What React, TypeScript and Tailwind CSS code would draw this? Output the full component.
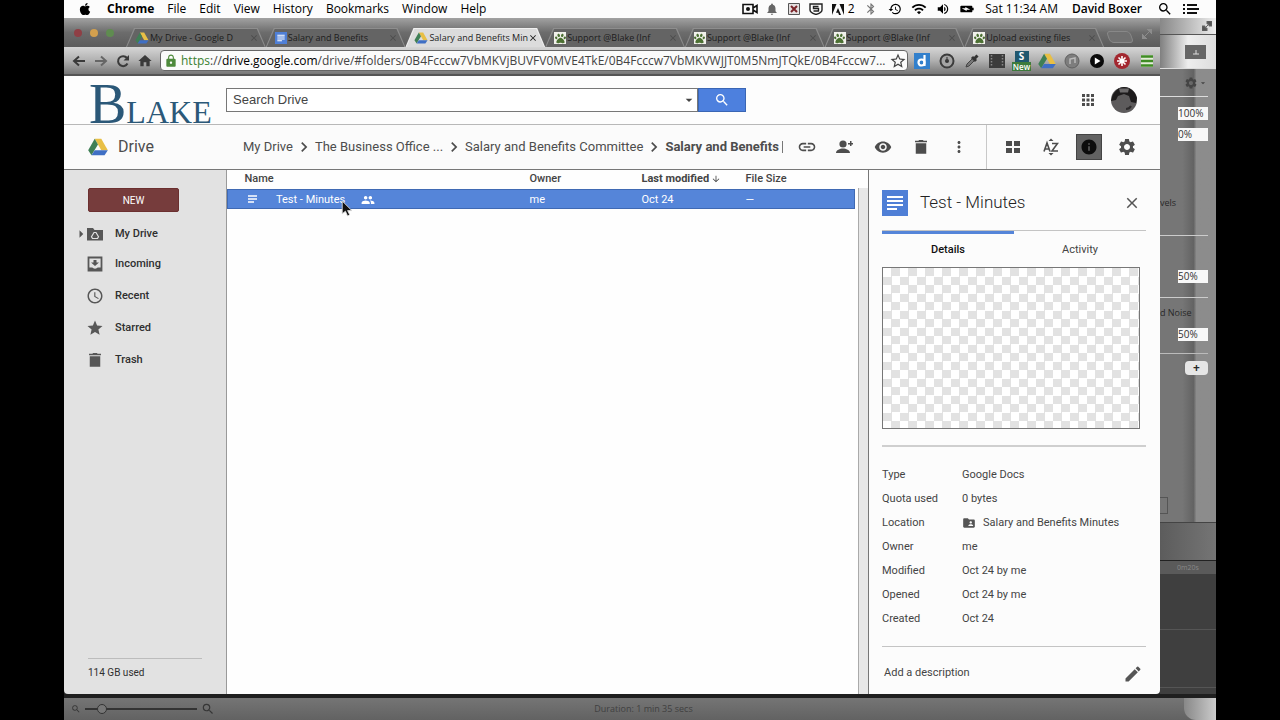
import type { ReactNode } from "react";
import {
  MdAccessTime,
  MdApps,
  MdArrowDownward,
  MdArrowDropDown,
  MdArrowRight,
  MdBatteryChargingFull,
  MdBluetooth,
  MdChevronRight,
  MdClose,
  MdFolderShared,
  MdHistory,
  MdHome,
  MdInfo,
  MdLink,
  MdLock,
  MdMoreVert,
  MdNotifications,
  MdPeople,
  MdSearch,
  MdSettings,
  MdStar,
  MdStarBorder,
  MdVisibility,
  MdVolumeUp,
  MdWifi,
} from "react-icons/md";
import { FaApple, FaPaw } from "react-icons/fa";

const menus = ["File", "Edit", "View", "History", "Bookmarks", "Window", "Help"];

function DriveLogo({ className = "" }: { className?: string }) {
  return (
    <svg viewBox="0 0 24 22" className={className} aria-hidden="true">
      <path d="M8 1h8l8 14h-8z" fill="#e8bf45" />
      <path d="M8 1l4 7L4 21 0 15z" fill="#3f7f55" />
      <path d="M8 15h16l-4 6H4z" fill="#3f6fc4" />
    </svg>
  );
}

function DocIcon({ className = "" }: { className?: string }) {
  return (
    <svg viewBox="0 0 26 26" className={className} aria-hidden="true">
      <path d="M0 0h26v26H0z" fill="#4f7fd6" />
      <path d="M5 7h16M5 11h16M5 15h16M5 19h10" stroke="#fff" strokeWidth="2.2" />
    </svg>
  );
}

function PawIcon() {
  return (
    <span className="flex size-3 shrink-0 items-center justify-center bg-[#f0f0ea]">
      <FaPaw className="size-[11px] text-[#4c7033]" />
    </span>
  );
}

function TrashIcon({ className = "" }: { className?: string }) {
  return (
    <svg viewBox="0 0 24 24" className={className} fill="currentColor" aria-hidden="true">
      <path d="M5 7h14v14H5zM20 3.500h-4.500l-1-1h-5l-1 1H4v2.200h16z" />
    </svg>
  );
}

function PencilIcon() {
  return (
    <svg viewBox="0 0 24 24" className="size-5 text-[#555]" fill="currentColor" aria-hidden="true">
      <path d="M3 17.250V21h3.750L17.810 9.940l-3.750-3.750zM20.710 7.040a1 1 0 0 0 0-1.410l-2.340-2.340a1 1 0 0 0-1.410 0l-1.830 1.830 3.750 3.750z" />
    </svg>
  );
}

function PersonAddIcon() {
  return (
    <svg viewBox="0 0 18 16" className="h-4 w-[18px]" fill="currentColor" aria-hidden="true">
      <circle cx="7" cy="5" r="3.6" />
      <path d="M0 14c0-3 4-4.500 7-4.500s7 1.500 7 4.500zM14 2h1.500v2H17v1.500h-1.500V7H14V5.500h-2V4h2z" />
    </svg>
  );
}

function GridIcon() {
  return (
    <svg viewBox="0 0 16 14" className="h-3.5 w-4" fill="currentColor" aria-hidden="true">
      <path d="M1 1h6v5H1zM9 1h6v5H9zM1 8h6v5H1zM9 8h6v5H9z" />
    </svg>
  );
}

function SortIcon() {
  return (
    <svg viewBox="0 0 16 18" className="h-[18px] w-4" aria-hidden="true">
      <path d="M5.500 3L8 .5 10.500 3zM5.500 15L8 17.500 10.500 15z" fill="currentColor" />
      <path d="M1 13.500L4 5l3 8.500M2 11h4M9 5.500h5.500L9 13h6" fill="none" stroke="currentColor" strokeWidth="1.600" />
    </svg>
  );
}

function FolderDriveIcon() {
  return (
    <svg viewBox="0 0 16 14" className="h-3.5 w-4" aria-hidden="true">
      <path d="M0 1h6l1.500 2H16v10.500H0z" fill="#575757" />
      <path d="M7 5.500h2l2.500 4.300-1 1.700h-5l-1-1.700z" fill="none" stroke="#e2e2e2" strokeWidth="1.200" />
    </svg>
  );
}

function IncomingIcon() {
  return (
    <svg viewBox="0 0 16 16" className="size-4" aria-hidden="true">
      <path d="M1.500 1.500h13v13h-13z" fill="none" stroke="#575757" strokeWidth="1.800" />
      <path d="M1 11.500h4.500c.5 1.500 4.500 1.500 5 0H15V15H1zM6.500 4h3v2.500H12L8 10 4 6.500h2.500z" fill="#575757" />
    </svg>
  );
}

function ArrowIcon({ flip = false }: { flip?: boolean }) {
  return (
    <svg viewBox="0 0 14 12" className="h-3 w-3.5" aria-hidden="true">
      <path
        d={flip ? "M1 6h11M7 1.500L12 6l-5 4.500" : "M13 6H2M7 1.500L2 6l5 4.500"}
        fill="none"
        stroke="currentColor"
        strokeWidth="2"
      />
    </svg>
  );
}

function ReloadIcon() {
  return (
    <svg viewBox="0 0 14 14" className="size-3.5" aria-hidden="true">
      <path d="M11.500 9.500A5 5 0 1 1 11 4" fill="none" stroke="currentColor" strokeWidth="2" />
      <path d="M13 1v5.500H7.500z" fill="currentColor" />
    </svg>
  );
}

function MenuCell({ children, wide = false }: { children: ReactNode; wide?: boolean }) {
  return <span className={`flex items-center justify-center ${wide ? "w-6" : "w-[22px]"}`}>{children}</span>;
}

function MenuBar() {
  return (
    <header className="flex h-[18px] items-center bg-[#fcfcfc] pl-3.5 pr-3 text-xs text-black">
      <FaApple className="size-3.5" />
      <span className="ml-[15px] font-bold">Chrome</span>
      <nav className="ml-[13px] flex gap-[13px]" aria-label="Menu bar">
        {menus.map((m) => (
          <button key={m} type="button">
            {m}
          </button>
        ))}
      </nav>
      <div className="ml-auto flex items-center whitespace-nowrap">
        <MenuCell>
          <svg viewBox="0 0 16 12" className="h-3 w-4" aria-hidden="true">
            <path d="M1 1.500h10v9H1zM11 5l4-2.500v7L11 7z" fill="none" stroke="#111" strokeWidth="1.600" />
            <circle cx="6" cy="6" r="2" fill="#111" />
          </svg>
        </MenuCell>
        <MenuCell>
          <MdNotifications className="size-3.5 text-[#666]" />
        </MenuCell>
        <MenuCell>
          <svg viewBox="0 0 12 12" className="size-3" aria-hidden="true">
            <path d="M.5.5h11v11H.5z" fill="#e4e0e0" stroke="#555" />
            <path d="M3 3l6 6M9 3L3 9" stroke="#7a2429" strokeWidth="2" />
          </svg>
        </MenuCell>
        <MenuCell>
          <svg viewBox="0 0 14 12" className="h-3 w-3.5" aria-hidden="true">
            <path d="M1 1h12v6c0 2-3 3.500-6 4.500C4 10.500 1 9 1 7z" fill="none" stroke="#222" strokeWidth="1.400" />
            <path d="M9.500 3.500h-5v2h5v2.500h-5" fill="none" stroke="#222" strokeWidth="1.400" />
          </svg>
        </MenuCell>
        <span className="flex w-8 items-center justify-center gap-1">
          <svg viewBox="0 0 12 11" className="h-[11px] w-3" aria-hidden="true">
            <path d="M0 0h4.500L0 11zM12 0H7.500L12 11zM6 4l3 7H7L6.200 8.800H4z" fill="#111" />
          </svg>
          2
        </span>
        <MenuCell wide>
          <MdBluetooth className="size-3.5 text-[#777]" />
        </MenuCell>
        <MenuCell wide>
          <MdHistory className="size-3.5" />
        </MenuCell>
        <MenuCell wide>
          <MdWifi className="size-4" />
        </MenuCell>
        <MenuCell wide>
          <MdVolumeUp className="size-3.5" />
        </MenuCell>
        <MenuCell wide>
          <MdBatteryChargingFull className="size-4 rotate-90" />
        </MenuCell>
        <span className="ml-1.5">Sat 11:34 AM</span>
        <span className="ml-3.5 mr-2.5 font-semibold">David Boxer</span>
        <button type="button" aria-label="Spotlight" className="flex w-[26px] justify-center">
          <MdSearch className="size-4" />
        </button>
        <button type="button" aria-label="Notification center" className="flex w-[26px] justify-center">
          <svg viewBox="0 0 16 10" className="h-2.5 w-4" aria-hidden="true">
            <path d="M0 1h2M0 5h2M0 9h2M4 1h10M4 5h12M4 9h10" stroke="#111" strokeWidth="2" />
          </svg>
        </button>
      </div>
    </header>
  );
}

type TabData = { title: string; icon: ReactNode; active?: boolean };

const tabs: TabData[] = [
  { title: "My Drive - Google D", icon: <DriveLogo className="h-3 w-3.5 shrink-0" /> },
  { title: "Salary and Benefits", icon: <DocIcon className="size-3 shrink-0" /> },
  { title: "Salary and Benefits Min", icon: <DriveLogo className="h-3 w-3.5 shrink-0" />, active: true },
  { title: "Support @Blake (Inf", icon: <PawIcon /> },
  { title: "Support @Blake (Inf", icon: <PawIcon /> },
  { title: "Support @Blake (Inf", icon: <PawIcon /> },
  { title: "Upload existing files", icon: <PawIcon /> },
];

function TabStrip() {
  return (
    <div className="flex h-[29px] items-end bg-linear-to-b from-[#a2a2a2] via-[#6c6c6c] to-[#5c5c5c] pl-2.5">
      <div className="flex w-[52px] gap-2 self-center">
        <span className="size-2 rounded-full bg-[#8f3f45]" />
        <span className="size-2 rounded-full bg-[#d3a04e]" />
        <span className="size-2 rounded-full bg-[#5f8c50]" />
      </div>
      <div className="flex min-w-0 flex-1 text-[9px]" role="tablist">
        {tabs.map((t, i) => (
          <div
            key={i}
            className={`min-w-0 flex-1 px-px pt-px [clip-path:polygon(8px_0,calc(100%-8px)_0,100%_100%,0_100%)] ${
              t.active ? "bg-[#f0f0f0]" : "bg-[#8d8d8d]"
            }`}
          >
            <div
              className={`flex h-[18px] items-center pl-2 pr-1.5 [clip-path:polygon(8px_0,calc(100%-8px)_0,100%_100%,0_100%)] ${
                t.active ? "bg-[#dcdcdc] text-[#1c1c1c]" : "bg-[#646464] text-[#1c1c1c]"
              }`}
            >
              {t.icon}
              <button
                type="button"
                role="tab"
                aria-selected={!!t.active}
                className={`ml-px flex-1 whitespace-nowrap text-left ${t.active ? "font-medium" : ""}`}
              >
                {t.title}
              </button>
              <button type="button" aria-label="Close tab">
                <MdClose className={t.active ? "size-2.5" : "size-2.5 text-[#4c4c4c]"} />
              </button>
            </div>
          </div>
        ))}
      </div>
      <button
        type="button"
        aria-label="New tab"
        className="mb-1 ml-1 h-3 w-6 skew-x-[20deg] rounded-sm border border-[#888] bg-[#707070]"
      />
      <svg viewBox="0 0 10 10" className="mb-2 ml-2.5 mr-2 size-2.5" aria-hidden="true">
        <path d="M5 0h5v5zM0 5v5h5zM9 1L1 9" fill="#8c8c8c" stroke="#8c8c8c" />
      </svg>
    </div>
  );
}

const extensions: { name: string; icon: ReactNode }[] = [
  {
    name: "Diigo",
    icon: (
      <svg viewBox="0 0 16 16" className="size-4">
        <path d="M0 0h16v16H0z" fill="#3280cc" />
        <path d="M10.500 2v11" stroke="#fff" strokeWidth="2.200" />
        <circle cx="7.500" cy="9.500" r="3" fill="none" stroke="#fff" strokeWidth="2.200" />
      </svg>
    ),
  },
  {
    name: "Clipper",
    icon: (
      <svg viewBox="0 0 16 16" className="size-4">
        <circle cx="8" cy="8" r="6.500" fill="#a4a4a4" stroke="#3c3c3c" strokeWidth="2" />
        <circle cx="8" cy="8" r="2" fill="#333" />
        <path d="M8 4v4" stroke="#444" strokeWidth="1.200" />
      </svg>
    ),
  },
  {
    name: "Color picker",
    icon: (
      <svg viewBox="0 0 16 16" className="size-4">
        <path d="M2 14l1-3 6-6 2 2-6 6z" fill="#777" stroke="#444" />
        <path d="M8 4l4 4M10 6l3.500-3.500" stroke="#333" strokeWidth="3" />
      </svg>
    ),
  },
  {
    name: "Video",
    icon: (
      <svg viewBox="0 0 16 16" className="size-4">
        <path d="M0 1h16v14H0z" fill="#3c3c3c" />
        <path d="M2.500 2v12M13.500 2v12" stroke="#888" strokeWidth="1.500" strokeDasharray="1.500 1.500" />
      </svg>
    ),
  },
  {
    name: "Snagit",
    icon: (
      <span className="flex w-[19px] flex-col items-center">
        <span className="w-3.5 bg-[#20586f] text-center text-[10px] leading-[11px] font-bold text-white">S</span>
        <span className="w-full bg-[#3d7a3c] text-center text-[8px] leading-[9px] font-semibold text-white">New</span>
      </span>
    ),
  },
  { name: "Drive", icon: <DriveLogo className="h-4 w-[18px]" /> },
  {
    name: "Music",
    icon: (
      <svg viewBox="0 0 16 16" className="size-4">
        <circle cx="8" cy="8" r="7" fill="#7d7d7d" stroke="#606060" />
        <path d="M6 11V6l5-1v5" fill="none" stroke="#bbb" strokeWidth="1.500" />
      </svg>
    ),
  },
  {
    name: "Player",
    icon: (
      <svg viewBox="0 0 16 16" className="size-3.5">
        <circle cx="8" cy="8" r="8" fill="#0a0a0a" />
        <path d="M5.500 4l6.500 4-6.500 4z" fill="#fff" />
      </svg>
    ),
  },
  {
    name: "LastPass",
    icon: (
      <svg viewBox="0 0 16 16" className="size-4">
        <circle cx="8" cy="8" r="8" fill="#a3272f" />
        <path d="M8 3v10M3 8h10M4.500 4.500l7 7M11.500 4.500l-7 7" stroke="#fff" strokeWidth="1.600" />
      </svg>
    ),
  },
  {
    name: "Chrome menu",
    icon: (
      <svg viewBox="0 0 12 12" className="size-3">
        <path d="M0 0h12v12H0z" fill="#e4ecd8" />
        <path d="M0 1.500h12M0 6h12M0 10.500h12" stroke="#3f8c24" strokeWidth="2.400" />
      </svg>
    ),
  },
];

function AddressBar() {
  return (
    <div className="flex h-[29px] items-center border-b-2 border-[#555] bg-linear-to-b from-[#d6d6d6] via-[#b0b0b0] to-[#787878] pl-1">
      <div className="flex text-[#3a3a3a]">
        <button type="button" aria-label="Back" className="flex w-[22px] items-center justify-center">
          <ArrowIcon />
        </button>
        <button type="button" aria-label="Forward" className="flex w-[22px] items-center justify-center text-[#666]">
          <ArrowIcon flip />
        </button>
        <button type="button" aria-label="Reload" className="flex w-[22px] items-center justify-center">
          <ReloadIcon />
        </button>
        <button type="button" aria-label="Home" className="flex w-[22px] items-center justify-center">
          <MdHome className="size-4" />
        </button>
      </div>
      <div className="ml-1 flex h-[21px] min-w-0 flex-1 items-center rounded-sm border border-[#666] bg-[#fbfbfb] pl-[3px]">
        <MdLock className="size-3.5 shrink-0 text-[#4e8a3c]" />
        <a href="#folders" className="ml-[3px] min-w-0 flex-1 whitespace-nowrap text-xs leading-4 text-[#444]">
          <span className="text-[#3a8030]">https</span>://<span className="text-black">drive.google.com</span>
          /drive/#folders/0B4Fcccw7VbMKVjBUVFV0MVE4TkE/0B4Fcccw7VbMKVWJJT0M5NmJTQkE/0B4Fcccw7...
        </a>
        <button type="button" aria-label="Bookmark this page">
          <MdStarBorder className="size-[18px] text-[#444]" />
        </button>
      </div>
      <div className="mx-px flex">
        {extensions.map((e) => (
          <button key={e.name} type="button" aria-label={e.name} className="flex w-[25px] items-center justify-center">
            {e.icon}
          </button>
        ))}
      </div>
    </div>
  );
}

function SearchHeader() {
  return (
    <div className="flex h-[49px] items-center border-b border-[#b8b8b8] bg-[#fdfdfd]">
      <div className="flex h-full w-[162px] shrink-0 items-baseline pl-[25px] font-['Liberation_Serif',serif] text-[32px] leading-[56px] text-[#2b5878]">
        <span className="text-[56px]">B</span>LAKE
      </div>
      <form className="flex h-6 w-[520px] font-['Liberation_Sans',sans-serif]" onSubmit={(e) => e.preventDefault()}>
        <label className="flex min-w-0 flex-1 items-center border border-[#777] bg-white">
          <input
            type="text"
            aria-label="Search Drive"
            placeholder="Search Drive"
            className="min-w-0 flex-1 px-1.5 text-[13px] outline-none placeholder:text-[#444]"
          />
          <MdArrowDropDown className="size-4 text-[#444]" />
        </label>
        <button type="submit" aria-label="Search" className="flex w-12 items-center justify-center border border-[#3a66b4] bg-[#4d80de] text-white">
          <MdSearch className="size-4" />
        </button>
      </form>
      <div className="ml-auto flex items-center gap-3.5 pr-[23px]">
        <button type="button" aria-label="Apps" className="text-[#4c4c4c]">
          <MdApps className="size-[18px]" />
        </button>
        <button type="button" aria-label="Account">
          <svg viewBox="0 0 26 26" className="size-[26px]" aria-hidden="true">
            <circle cx="13" cy="13" r="13" fill="#5d5b5c" />
            <path d="M1 10C3 4 8 0 13 0c6 0 11 4 13 11l-1 5-5-1-2-6-5-2-6 2-2 4-5 1z" fill="#1d1b1c" />
            <path d="M8 1.500h10l-1 4H9z" fill="#6c6a6b" />
            <path d="M15 22c2 0 4-1 5-3" fill="none" stroke="#2d2b2c" strokeWidth="2" />
          </svg>
        </button>
      </div>
    </div>
  );
}

const crumbs = ["My Drive", "The Business Office ...", "Salary and Benefits Committee"];

function ToolButton({ label, children }: { label: string; children: ReactNode }) {
  return (
    <button type="button" aria-label={label} className="flex h-full w-[38px] items-center justify-center">
      {children}
    </button>
  );
}

function DriveToolbar() {
  return (
    <div className="flex h-[45px] border-b border-[#777] bg-[#fbfbfb] text-[#4d4d4d]">
      <div className="flex w-[162px] shrink-0 items-center pl-6">
        <DriveLogo className="h-[18px] w-5" />
        <span className="ml-2.5 text-base">Drive</span>
      </div>
      <nav aria-label="Breadcrumb" className="flex min-w-0 flex-1 items-center overflow-hidden whitespace-nowrap pl-[17px] text-[13px]">
        {crumbs.map((c) => (
          <span key={c} className="flex shrink-0 items-center">
            <a href="#folders">{c}</a>
            <MdChevronRight className="mx-px size-5" />
          </span>
        ))}
        <a href="#folders" className="font-bold">
          Salary and Benefits
        </a>
        <span className="ml-[3px] h-3 border-l border-[#777]" />
      </nav>
      <div className="flex pl-1 pr-2">
        <ToolButton label="Get link">
          <MdLink className="size-5" />
        </ToolButton>
        <ToolButton label="Share">
          <PersonAddIcon />
        </ToolButton>
        <ToolButton label="Preview">
          <MdVisibility className="size-[18px]" />
        </ToolButton>
        <ToolButton label="Remove">
          <TrashIcon className="size-[18px]" />
        </ToolButton>
        <ToolButton label="More actions">
          <MdMoreVert className="size-[18px]" />
        </ToolButton>
      </div>
      <div className="flex w-[174px] items-center border-l border-[#c8c8c8] pl-[7px]">
        <ToolButton label="Grid view">
          <GridIcon />
        </ToolButton>
        <ToolButton label="Sort">
          <SortIcon />
        </ToolButton>
        <ToolButton label="View details">
          <span className="flex size-[26px] items-center justify-center border border-[#444] bg-[#626262]">
            <MdInfo className="size-[18px] text-[#0c0c0c]" />
          </span>
        </ToolButton>
        <ToolButton label="Settings">
          <MdSettings className="size-5" />
        </ToolButton>
      </div>
    </div>
  );
}

const places = [
  { name: "Incoming", icon: <IncomingIcon /> },
  { name: "Recent", icon: <MdAccessTime className="size-5" /> },
  { name: "Starred", icon: <MdStar className="size-5" /> },
  { name: "Trash", icon: <TrashIcon className="size-[18px]" /> },
];

function Sidebar() {
  return (
    <aside className="flex w-[162px] shrink-0 flex-col bg-[#e2e2e2] pt-[18px] text-[#2f2f2f]">
      <button type="button" className="ml-6 h-6 w-[91px] rounded-xs border border-[#6b2f2f] bg-[#763c3c] text-[10px] text-white">
        NEW
      </button>
      <nav className="mt-2 flex flex-col text-[11px] font-medium" aria-label="Places">
        <a href="#my-drive" className="flex h-7 items-center pl-2">
          <MdArrowRight className="-mr-1 size-[18px] text-[#555]" />
          <span className="flex w-[18px] justify-center">
            <FolderDriveIcon />
          </span>
          <span className="ml-[11px]">My Drive</span>
        </a>
        {places.map((p) => (
          <a key={p.name} href="#folders" className="flex h-8 items-center pl-[22px]">
            <span className="flex w-[18px] justify-center text-[#575757]">{p.icon}</span>
            <span className="ml-[11px]">{p.name}</span>
          </a>
        ))}
      </nav>
      <div className="mt-auto px-6 pb-3.5 text-[10px]">
        <div className="mb-1.5 border-t border-[#bcbcbc]" />
        114 GB used
      </div>
    </aside>
  );
}

function FileList() {
  return (
    <main className="flex min-w-0 flex-1 border-l border-[#999] bg-[#fefefe]">
      <div className="min-w-0 flex-1 pr-[3px]">
        <table className="w-full table-fixed border-collapse text-left text-[11px] text-[#444]">
          <thead>
            <tr className="h-[19px]">
              <th scope="col" className="pl-[17px] font-medium">
                Name
              </th>
              <th scope="col" className="w-28 font-medium">
                Owner
              </th>
              <th scope="col" className="w-[104px] whitespace-nowrap font-bold">
                Last modified
                <MdArrowDownward className="ml-0.5 inline size-2.5" />
              </th>
              <th scope="col" className="w-[109px] font-medium">
                File Size
              </th>
            </tr>
          </thead>
          <tbody>
            <tr className="h-[19px] border border-[#3f69b3] bg-[#5585d9] leading-[13px] text-white">
              <td className="pl-[17px] pt-0.5">
                <div className="relative flex items-center">
                  <svg viewBox="0 0 14 12" className="h-3 w-3.5" aria-hidden="true">
                    <path d="M3 2h9M3 5h9M3 8h6" stroke="#fff" strokeWidth="1.500" />
                  </svg>
                  <a href="#test-minutes" className="ml-[17px]">
                    Test - Minutes
                  </a>
                  <MdPeople className="ml-4 size-3.5" />
                  <svg viewBox="0 0 10 15" className="absolute left-24 top-2 z-10 h-4 w-[11px]" aria-hidden="true">
                    <path d="M1 0v12l3-2.500L6 14l2-1-2-4h4z" fill="#111" stroke="#ddd" strokeWidth=".8" />
                  </svg>
                </div>
              </td>
              <td className="pt-0.5">me</td>
              <td className="pt-0.5">Oct 24</td>
              <td className="pt-0.5">—</td>
            </tr>
          </tbody>
        </table>
      </div>
      <div className="mt-[18px] w-2.5 border-l border-[#aaa] bg-[#e8e8e8]" />
    </main>
  );
}

const facts: { label: string; value: string; folder?: boolean }[] = [
  { label: "Type", value: "Google Docs" },
  { label: "Quota used", value: "0 bytes" },
  { label: "Location", value: "Salary and Benefits Minutes", folder: true },
  { label: "Owner", value: "me" },
  { label: "Modified", value: "Oct 24 by me" },
  { label: "Opened", value: "Oct 24 by me" },
  { label: "Created", value: "Oct 24" },
];

function Details() {
  return (
    <aside className="flex w-[292px] shrink-0 flex-col border-l border-[#777] bg-[#fcfcfc] pl-[13px] pr-3.5 text-[11px] text-[#444]">
      <div className="flex h-[60px] items-center pt-1.5">
        <DocIcon className="size-[26px]" />
        <h2 className="ml-3 text-[17px] font-light text-[#222]">Test - Minutes</h2>
        <button type="button" aria-label="Close details" className="ml-auto mr-[5px]">
          <MdClose className="size-[18px] text-[#555]" />
        </button>
      </div>
      <div className="flex border-t border-[#c4c4c4]" role="tablist">
        <button type="button" role="tab" aria-selected="true" className="h-9 flex-1 border-t-3 border-[#5585d9] font-medium text-[#111]">
          Details
        </button>
        <button type="button" role="tab" aria-selected="false" className="h-9 flex-1 border-t-3 border-transparent">
          Activity
        </button>
      </div>
      <div className="mr-1.5 h-[162px] border border-[#777] bg-[repeating-conic-gradient(#e2e2e2_0_25%,#ffffff_0_50%)] bg-[length:17px_17px]" />
      <dl className="mt-4 border-t-2 border-[#cfcfcf] pt-4">
        {facts.map((f) => (
          <div key={f.label} className="flex h-6 items-center">
            <dt className="w-20">{f.label}</dt>
            <dd className="flex items-center">
              {f.folder && <MdFolderShared className="mr-[7px] size-3.5 text-[#555]" />}
              {f.value}
            </dd>
          </div>
        ))}
      </dl>
      <div className="mt-auto flex h-12 items-center border-t border-[#c4c4c4] pl-0.5 pt-1.5">
        Add a description
        <button type="button" aria-label="Edit description" className="ml-auto mr-[3px]">
          <PencilIcon />
        </button>
      </div>
    </aside>
  );
}

function Percent({ value, label }: { value: string; label: string }) {
  return (
    <input
      type="text"
      aria-label={label}
      defaultValue={value}
      className="ml-auto block h-[13px] w-8 border-l-2 border-[#777] bg-[#f8f8f8] text-[10px] text-[#333]"
    />
  );
}

/* Part of the video editor's inspector that shows beside the browser window. */
function EditorInspector() {
  return (
    <aside className="flex w-14 shrink-0 flex-col overflow-hidden bg-[#3f3f3f] text-[9px] text-[#282828]">
      <div className="flex h-[17px] items-center justify-end border-b border-[#555] bg-linear-to-r from-[#888] to-[#eee] pr-1">
        <svg viewBox="0 0 10 10" className="size-2.5" aria-hidden="true">
          <path d="M5 0h5v5H7V3H5zM0 5h3v2h2v3H0zM3 7l4-4" fill="#555" stroke="#666" />
        </svg>
      </div>
      <div className="flex h-[34px] items-center justify-end border-b border-[#ddd] bg-linear-to-r from-[#808080] via-[#eee] to-[#ddd] pr-2.5">
        <button type="button" aria-label="Adjust" className="flex h-3.5 w-[21px] items-center justify-center bg-[#666]">
          <svg viewBox="0 0 8 6" className="h-1.5 w-2" aria-hidden="true">
            <path d="M1 5h6M4 1v4" stroke="#ddd" />
          </svg>
        </button>
      </div>
      <div className="flex h-[453px] flex-col bg-linear-to-r from-[#767676] from-40% via-[#636363] via-60% to-[#8c8c8c] to-65% pr-2">
        <div className="flex h-7 items-center justify-end border-b border-[#ddd] text-[#444]">
          <MdSettings className="size-3.5" />
          <MdArrowDropDown className="size-2.5" />
        </div>
        <div className="mt-2.5 flex flex-col gap-2">
          <Percent label="Opacity" value="100%" />
          <Percent label="Blend" value="0%" />
        </div>
        <span className="mt-14 leading-3">vels</span>
        <div className="mt-[26px] border-b border-[#ccc]" />
        <div className="mt-[34px]">
          <Percent label="Volume" value="50%" />
        </div>
        <div className="mt-3.5 border-b border-[#ccc]" />
        <span className="mt-[9px] whitespace-nowrap leading-3">d Noise</span>
        <div className="mt-[9px]">
          <Percent label="Reduction" value="50%" />
        </div>
        <div className="mt-3 border-b border-[#bbb]" />
        <button type="button" aria-label="Add" className="ml-auto mt-[7px] h-3.5 w-[23px] rounded bg-[#e6e6e6] text-xs leading-3 font-bold">
          +
        </button>
        <div className="mt-[122px] h-[17px] w-2 border border-l-0 border-[#555]" />
      </div>
      <div className="h-[39px] border-y border-[#222] border-t-[#444] bg-linear-to-r from-[#5c5c5c] to-[#757575]" />
      <div className="h-[13px] bg-[#5a5a5a] text-center text-[7px] leading-[13px] text-[#888]">0m20s</div>
      <div className="h-14 border-b border-[#555]" />
      <div className="h-[58px] border-b border-[#555]" />
    </aside>
  );
}

function EditorFooter() {
  return (
    <footer className="flex items-center border-t-4 border-[#1f1f1f] bg-linear-to-b from-[#757575] to-[#626262] text-[#363636]">
      <div className="flex h-[22px] flex-1 items-center gap-1 pl-[7px]">
        <MdSearch className="size-2.5" />
        <input
          type="range"
          aria-label="Timeline zoom"
          defaultValue={12}
          className="h-0.5 w-[112px] appearance-none bg-[#333] [&::-webkit-slider-thumb]:size-2.5 [&::-webkit-slider-thumb]:appearance-none [&::-webkit-slider-thumb]:rounded-full [&::-webkit-slider-thumb]:border [&::-webkit-slider-thumb]:border-[#333] [&::-webkit-slider-thumb]:bg-[#777]"
        />
        <MdSearch className="size-3.5" />
      </div>
      <span className="text-[9px] text-[#404040]">Duration: 1 min 35 secs</span>
      <div className="flex flex-1 justify-end self-stretch">
        <span className="w-8 rounded-bl-xl bg-linear-to-r from-[#888] to-[#ccc]" />
      </div>
    </footer>
  );
}

export default function App() {
  return (
    <div className="min-h-screen bg-black px-16">
      <div className="flex min-h-screen flex-col bg-[#2a2a2a] font-['Open_Sans','Noto_Sans',sans-serif]">
        <MenuBar />
        <div className="flex flex-1">
          <section className="flex min-w-0 flex-1 flex-col overflow-hidden rounded-b-sm" aria-label="Browser window">
            <TabStrip />
            <AddressBar />
            <div className="flex flex-1 flex-col font-[Roboto,sans-serif]">
              <SearchHeader />
              <DriveToolbar />
              <div className="flex flex-1">
                <Sidebar />
                <FileList />
                <Details />
              </div>
            </div>
          </section>
          <EditorInspector />
        </div>
        <EditorFooter />
      </div>
    </div>
  );
}
